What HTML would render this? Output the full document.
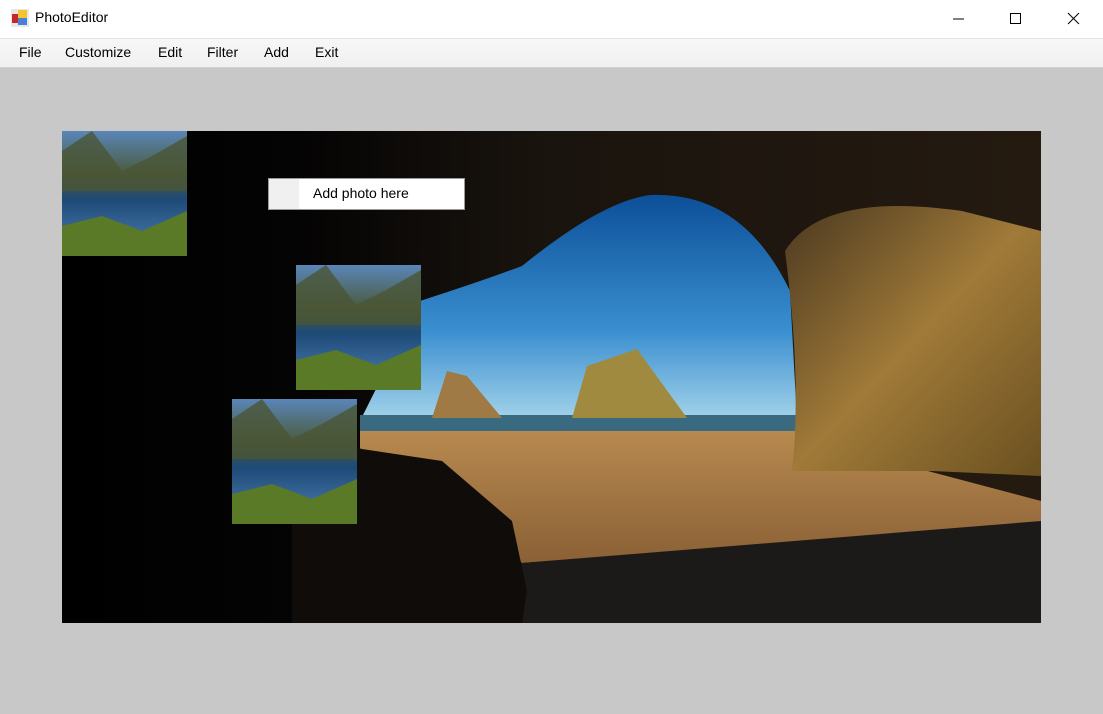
<!DOCTYPE html>
<html><head><meta charset="utf-8"><style>
body{margin:0;width:1103px;height:714px;background:#c8c8c8;font-family:"Segoe UI","Liberation Sans",sans-serif;overflow:hidden;position:relative}
.title{position:absolute;top:0;left:0;width:1103px;height:38px;background:#fff}
.title span{position:absolute;left:35px;top:9px;font-size:14px;color:#000}
.menu{position:absolute;top:38px;left:0;width:1103px;height:30px;background:linear-gradient(#f7f7f7,#f0f0f0);border-top:1px solid #e3e3e3;border-bottom:1px solid #d0d0d0;box-sizing:border-box}
.menu span{position:absolute;top:5px;font-size:14px;color:#000}
.ctl{position:absolute;top:10px}
#pic{position:absolute;left:62px;top:131px}
.cm{position:absolute;left:268px;top:178px;width:197px;height:32px;background:#fff;border:1px solid #9a9a9a;box-sizing:border-box}
.cm .g{position:absolute;left:0;top:0;width:30px;height:30px;background:#f0f0f0}
.cm span{position:absolute;left:44px;top:6px;font-size:14px;color:#000}
</style></head><body>
<div class="title">
<svg style="position:absolute;left:11px;top:9px" width="18" height="18"><rect x="0" y="0" width="18" height="18" fill="#e8e8e8"/><rect x="1" y="5" width="7" height="9" fill="#c62828"/><rect x="7" y="1" width="9" height="8" fill="#f4c430"/><rect x="7" y="9" width="9" height="7" fill="#4a7fd8"/></svg>
<span>PhotoEditor</span>
<svg class="ctl" style="left:952px" width="14" height="18"><line x1="1" y1="9" x2="12" y2="9" stroke="#000"/></svg>
<svg class="ctl" style="left:1009px" width="14" height="18"><rect x="1.5" y="3.5" width="10" height="10" fill="none" stroke="#000"/></svg>
<svg class="ctl" style="left:1067px" width="14" height="18"><path d="M1 3L12 14M12 3L1 14" stroke="#000"/></svg>
</div>
<div class="menu"><span style="left:19px">File</span><span style="left:65px">Customize</span><span style="left:158px">Edit</span><span style="left:207px">Filter</span><span style="left:264px">Add</span><span style="left:315px">Exit</span></div>
<svg id="pic" width="979" height="492" viewBox="0 0 979 492">
<defs>
<linearGradient id="bg" x1="0" y1="0" x2="1" y2="0"><stop offset="0" stop-color="#000"/><stop offset=".25" stop-color="#050404"/><stop offset=".5" stop-color="#1a140e"/><stop offset="1" stop-color="#241a10"/></linearGradient>
<linearGradient id="sky" x1="0" y1="0" x2="0" y2="1"><stop offset="0" stop-color="#0b4f98"/><stop offset=".6" stop-color="#3a8fd0"/><stop offset="1" stop-color="#a5d4ea"/></linearGradient>
<linearGradient id="sand" x1="0" y1="0" x2="0" y2="1"><stop offset="0" stop-color="#b88a50"/><stop offset="1" stop-color="#8a6035"/></linearGradient>
<linearGradient id="rock" x1="0" y1="0" x2="1" y2="1"><stop offset="0" stop-color="#4a3820"/><stop offset=".5" stop-color="#a07a38"/><stop offset="1" stop-color="#6a5020"/></linearGradient>
<linearGradient id="lake" x1="0" y1="0" x2="0" y2="1"><stop offset="0" stop-color="#5a86b8"/><stop offset=".35" stop-color="#4a5a3a"/><stop offset=".55" stop-color="#1e4a78"/><stop offset=".8" stop-color="#3a6a9a"/><stop offset="1" stop-color="#6a8a30"/></linearGradient>
<g id="th"><rect width="125" height="125" fill="url(#lake)"/><path d="M0 20L30 0L60 40L90 25L125 5V60H0Z" fill="#4a5535" opacity=".8"/><path d="M0 95L40 85L80 100L125 80V125H0Z" fill="#5a7a28"/></g>
</defs>
<rect width="979" height="492" fill="url(#bg)"/>
<path d="M298 290 L358 170 Q420 150 460 135 Q540 70 588 64 Q680 60 728 160 L735 290Z" fill="url(#sky)"/>
<rect x="298" y="284" width="440" height="20" fill="#3a6a80"/>
<path d="M298 300 L740 300 L790 320 L979 370 L979 392 L460 432 L400 380 L298 330Z" fill="url(#sand)"/>
<path d="M460 432 L979 390 L979 492 L460 492Z" fill="#1c1a18"/>
<path d="M370 287 L385 240 L405 245 L440 287Z" fill="#a07a45"/>
<path d="M510 287 L525 235 L575 218 L625 287Z" fill="#a08a40"/>
<path d="M723 120 Q760 60 900 80 L979 100 L979 345 L870 340 L730 340 Q740 250 723 120Z" fill="url(#rock)"/>
<path d="M300 318 L380 330 L450 390 L465 460 L460 492 L230 492 L230 300Z" fill="#0f0c09"/>
<use href="#th" x="0" y="0"/>
<use href="#th" x="234" y="134"/>
<use href="#th" x="170" y="268"/>
</svg>
<div class="cm"><div class="g"></div><span>Add photo here</span></div>
</body></html>
